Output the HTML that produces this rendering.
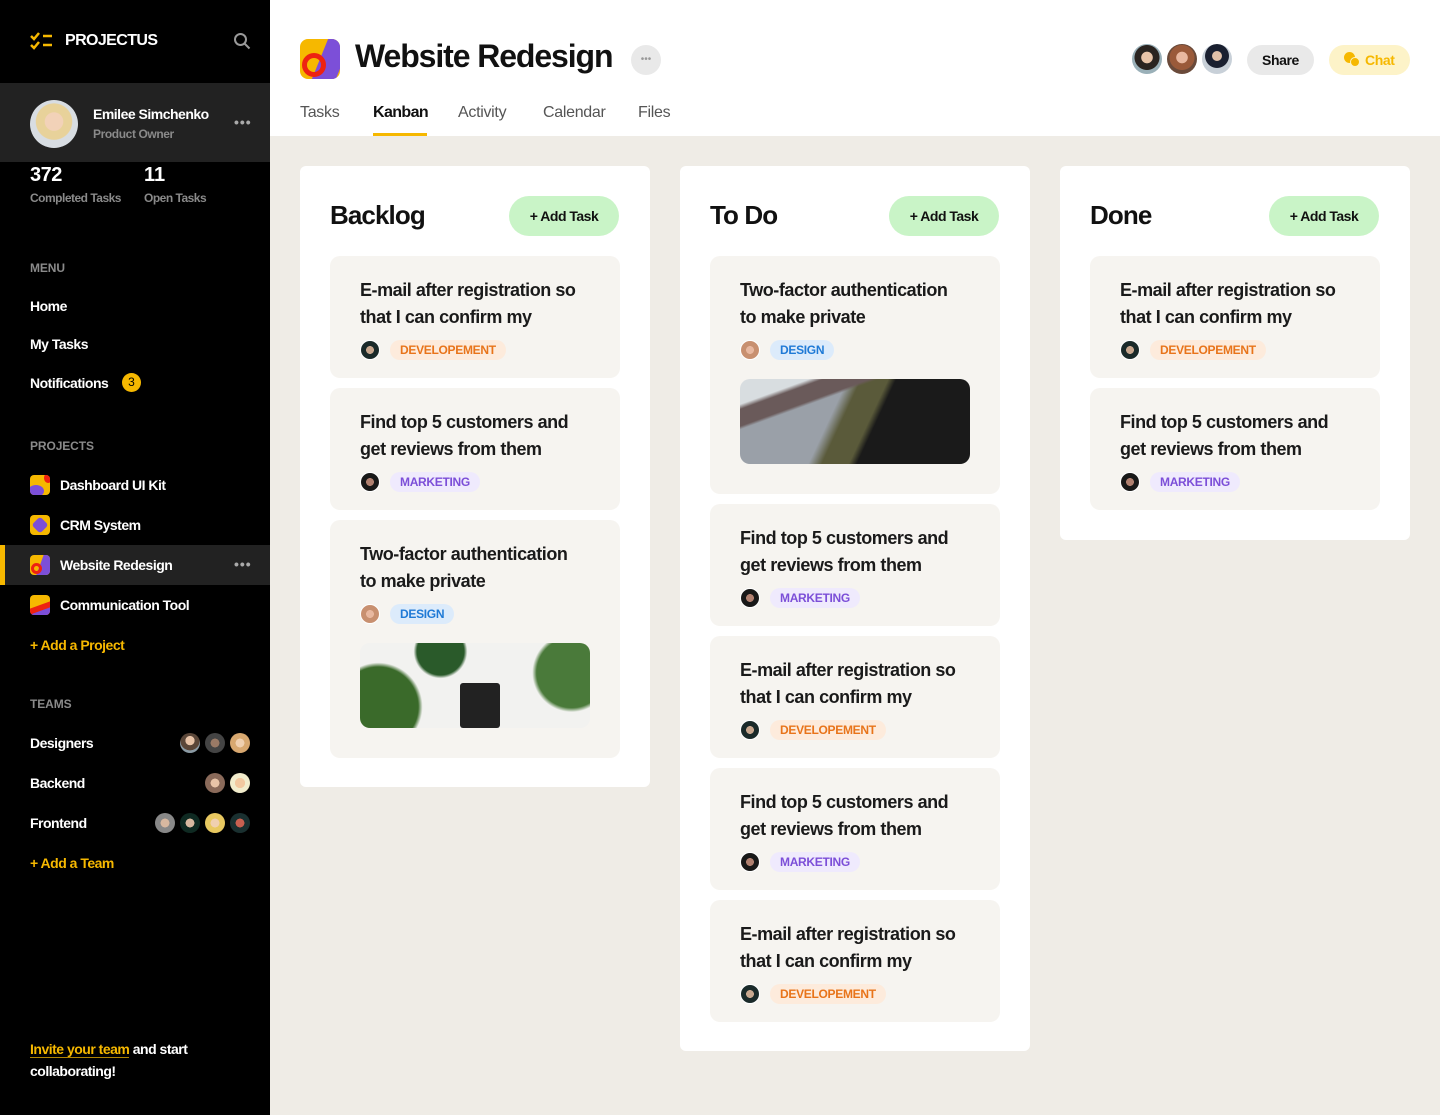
<!DOCTYPE html>
<html><head><meta charset="utf-8">
<style>
*{box-sizing:border-box;margin:0;padding:0}
body{width:1440px;height:1115px;font-family:"Liberation Sans",Arial,sans-serif;background:#efece6;position:relative;overflow:hidden;color:#111}
.sb{position:absolute;left:0;top:0;width:270px;height:1115px;background:#000;color:#fff}
.a{position:absolute}
.b{font-weight:bold}
.lbl{font-size:12px;font-weight:bold;color:#8a8a8a;letter-spacing:-.1px}
.nav{font-size:14px;font-weight:bold;color:#fff;letter-spacing:-.5px}
.pic{position:absolute;width:20px;height:20px;border-radius:4px;overflow:hidden}
.av{display:inline-block;border-radius:50%;background:radial-gradient(circle at 50% 38%,#e8c4a8 0 28%,#5a4638 30% 60%,#8a9aa4 62%)}
.main{position:absolute;left:270px;top:0;width:1170px;height:136px;background:#fff}
.tab{position:absolute;top:104px;font-size:16px;color:#555;letter-spacing:-.3px}
.col{position:absolute;top:166px;width:350px;background:#fff;border-radius:6px;padding:0 30px}
.col h2{position:absolute;left:30px;top:34px;font-size:26px;font-weight:bold;color:#111;letter-spacing:-.9px}
.add{position:absolute;right:31px;top:30px;width:110px;height:40px;border-radius:20px;background:#c9f4c7;font-size:14px;font-weight:bold;text-align:center;line-height:40px;color:#111;letter-spacing:-.5px}
.cards{position:absolute;left:30px;top:90px;width:290px}
.card{background:#f6f4f0;border-radius:10px;padding:21px 30px 17px;margin-bottom:10px}
.card .t{font-size:18px;line-height:27px;font-weight:bold;color:#1a1a1a;letter-spacing:-.45px;white-space:nowrap}
.row{display:flex;align-items:center;margin-top:8px;height:22px}
.row .av{width:20px;height:20px;margin-right:10px;border:1px solid #fff}
.tag{font-size:12px;font-weight:bold;padding:0 10px;height:20px;line-height:20px;border-radius:10px;letter-spacing:-.3px}
.dev{background:#fdebdc;color:#e8741a}
.mk{background:#efeafd;color:#7c4fd8}
.ds{background:#dcebfb;color:#1f7ad6}
.img{height:85px;border-radius:10px;margin-top:18px}
</style></head><body>
<div class="sb">
  <svg class="a" style="left:30px;top:32px" width="24" height="18" viewBox="0 0 24 18"><path d="M1 4l3 3 5-6M1 13l3 3 5-6" stroke="#f6b800" stroke-width="2.5" fill="none"/><path d="M13 4h9M13 13h9" stroke="#f6b800" stroke-width="2.5"/></svg>
  <div class="a b" style="left:65px;top:32px;font-size:16px;letter-spacing:-.6px">PROJECTUS</div>
  <svg class="a" style="left:233px;top:32px" width="18" height="18" viewBox="0 0 18 18"><circle cx="7.5" cy="7.5" r="5.5" stroke="#999" stroke-width="2" fill="none"/><path d="M11.5 11.5l5 5" stroke="#999" stroke-width="2"/></svg>
  <div class="a" style="left:0;top:83px;width:270px;height:79px;background:#222"></div>
  <div class="a av" style="left:30px;top:100px;width:48px;height:48px;background:radial-gradient(circle at 50% 45%,#f2d2b8 0 25%,#e8d29a 27% 50%,#d8dde2 52%)"></div>
  <div class="a nav" style="left:93px;top:106px">Emilee Simchenko</div>
  <div class="a" style="left:93px;top:127px;font-size:12px;color:#8a8a8a;font-weight:bold;letter-spacing:-.4px">Product Owner</div>
  <div class="a b" style="left:234px;top:114px;color:#aaa;font-size:14px;letter-spacing:1px">•••</div>
  <div class="a b" style="left:30px;top:164px;font-size:20px;letter-spacing:-.5px">372</div>
  <div class="a" style="left:30px;top:191px;font-size:12px;color:#8a8a8a;font-weight:bold;letter-spacing:-.5px">Completed Tasks</div>
  <div class="a b" style="left:144px;top:164px;font-size:20px">11</div>
  <div class="a" style="left:144px;top:191px;font-size:12px;color:#8a8a8a;font-weight:bold;letter-spacing:-.5px">Open Tasks</div>
  <div class="a lbl" style="left:30px;top:261px">MENU</div>
  <div class="a nav" style="left:30px;top:298px">Home</div>
  <div class="a nav" style="left:30px;top:336px">My Tasks</div>
  <div class="a nav" style="left:30px;top:375px">Notifications</div>
  <div class="a" style="left:122px;top:373px;width:19px;height:19px;border-radius:50%;background:#f6b800;color:#000;font-size:12px;text-align:center;line-height:19px">3</div>
  <div class="a lbl" style="left:30px;top:439px">PROJECTS</div>
  <div class="pic" style="left:30px;top:475px;background:#f6b800"><div class="a" style="left:-2px;top:10px;width:16px;height:12px;border-radius:50%;background:#7c4fd8"></div><div class="a" style="left:14px;top:-2px;width:8px;height:10px;border-radius:50%;background:#e21"></div></div>
  <div class="a nav" style="left:60px;top:477px">Dashboard UI Kit</div>
  <div class="pic" style="left:30px;top:515px;background:#f6b800"><div class="a" style="left:4px;top:4px;width:12px;height:12px;border-radius:3px;transform:rotate(45deg);background:#7c4fd8"></div></div>
  <div class="a nav" style="left:60px;top:517px">CRM System</div>
  <div class="a" style="left:0;top:545px;width:270px;height:40px;background:#222"></div>
  <div class="a" style="left:0;top:545px;width:5px;height:40px;background:#f6b800"></div>
  <div class="pic" style="left:30px;top:555px;background:#f6b800"><div class="a" style="left:10px;top:-4px;width:14px;height:28px;background:#7c4fd8;transform:skewX(-20deg)"></div><div class="a" style="left:1px;top:8px;width:11px;height:11px;border-radius:50%;border:3px solid #e21"></div></div>
  <div class="a nav" style="left:60px;top:557px">Website Redesign</div>
  <div class="a b" style="left:234px;top:556px;color:#aaa;font-size:14px;letter-spacing:1px">•••</div>
  <div class="pic" style="left:30px;top:595px;background:#f6b800"><div class="a" style="left:-4px;top:10px;width:28px;height:14px;background:#e21;transform:skewY(-20deg)"></div><div class="a" style="left:-4px;top:16px;width:28px;height:10px;background:#7c4fd8;transform:skewY(-20deg)"></div></div>
  <div class="a nav" style="left:60px;top:597px">Communication Tool</div>
  <div class="a nav" style="left:30px;top:637px;color:#f6b800">+ Add a Project</div>
  <div class="a lbl" style="left:30px;top:697px">TEAMS</div>
  <div class="a nav" style="left:30px;top:735px">Designers</div>
  <div class="a nav" style="left:30px;top:775px">Backend</div>
  <div class="a nav" style="left:30px;top:815px">Frontend</div>
  <div class="a" style="left:180px;top:733px"><span class="av" style="width:20px;height:20px"></span></div>
  <div class="a" style="left:205px;top:733px"><span class="av" style="width:20px;height:20px;background:radial-gradient(circle,#9a7a66 0 30%,#444 32%)"></span></div>
  <div class="a" style="left:230px;top:733px"><span class="av" style="width:20px;height:20px;background:radial-gradient(circle,#f0d0b0 0 30%,#d8a870 32%)"></span></div>
  <div class="a" style="left:205px;top:773px"><span class="av" style="width:20px;height:20px;background:radial-gradient(circle,#e8c4a8 0 30%,#8a6a5a 32%)"></span></div>
  <div class="a" style="left:230px;top:773px"><span class="av" style="width:20px;height:20px;background:radial-gradient(circle,#f2c8a0 0 35%,#f2eccc 37%)"></span></div>
  <div class="a" style="left:155px;top:813px"><span class="av" style="width:20px;height:20px;background:radial-gradient(circle,#d8b8a0 0 30%,#888 32%)"></span></div>
  <div class="a" style="left:180px;top:813px"><span class="av" style="width:20px;height:20px;background:radial-gradient(circle,#d8b8a0 0 30%,#0f2a22 32%)"></span></div>
  <div class="a" style="left:205px;top:813px"><span class="av" style="width:20px;height:20px;background:radial-gradient(circle,#f0d0b0 0 30%,#e8c860 32%)"></span></div>
  <div class="a" style="left:230px;top:813px"><span class="av" style="width:20px;height:20px;background:radial-gradient(circle,#c86050 0 30%,#1a3030 32%)"></span></div>
  <div class="a nav" style="left:30px;top:855px;color:#f6b800">+ Add a Team</div>
  <div class="a nav" style="left:30px;top:1038px;line-height:22px"><span style="color:#f6b800;border-bottom:1px solid #b08400">Invite your team</span> and start<br>collaborating!</div>
</div>

<div class="main">
  <div class="a" style="left:30px;top:39px;width:40px;height:40px;border-radius:8px;overflow:hidden;background:#f6b800"><div class="a" style="left:20px;top:-6px;width:24px;height:52px;background:#7c4fd8;transform:skewX(-22deg)"></div><div class="a" style="left:2px;top:14px;width:24px;height:24px;border-radius:50%;border:5px solid #e21"></div></div>
  <div class="a b" style="left:85px;top:38px;font-size:32px;letter-spacing:-1.1px;color:#111">Website Redesign</div>
  <div class="a" style="left:361px;top:45px;width:30px;height:30px;border-radius:50%;background:#e9e9e9;color:#999;font-size:10px;text-align:center;line-height:30px">•••</div>
  <div class="tab" style="left:30px">Tasks</div>
  <div class="tab" style="left:103px;color:#111;font-weight:bold;letter-spacing:-.6px">Kanban</div>
  <div class="a" style="left:103px;top:133px;width:54px;height:3px;background:#f6b800"></div>
  <div class="tab" style="left:188px">Activity</div>
  <div class="tab" style="left:273px">Calendar</div>
  <div class="tab" style="left:368px">Files</div>
  <div class="a" style="left:862px;top:44px"><span class="av" style="width:30px;height:30px;background:radial-gradient(circle at 50% 45%,#e8c4a8 0 25%,#2a2420 27% 55%,#9ab0b8 57%)"></span></div>
  <div class="a" style="left:897px;top:44px"><span class="av" style="width:30px;height:30px;background:radial-gradient(circle at 50% 45%,#e8b8a0 0 25%,#9a5a3a 27% 55%,#6a4a3a 57%)"></span></div>
  <div class="a" style="left:932px;top:44px"><span class="av" style="width:30px;height:30px;background:radial-gradient(circle at 50% 40%,#e0c0a8 0 20%,#1a2030 22% 50%,#c8d0d8 52%)"></span></div>
  <div class="a b" style="left:977px;top:45px;width:67px;height:30px;border-radius:15px;background:#e9e9e9;font-size:14px;text-align:center;line-height:30px;letter-spacing:-.4px">Share</div>
  <div class="a b" style="left:1059px;top:45px;width:81px;height:30px;border-radius:15px;background:#fdf3c8;color:#f6b800;font-size:14px;line-height:30px;padding-left:36px;letter-spacing:-.4px">Chat</div>
  <div class="a" style="left:1074px;top:52px;width:11px;height:11px;border-radius:50%;background:#f6b800"></div>
  <div class="a" style="left:1080px;top:57px;width:10px;height:10px;border-radius:50%;background:#f6b800;border:1px solid #fdf3c8"></div>
</div>

<div class="col" style="left:300px;height:621px">
  <h2>Backlog</h2><div class="add">+ Add Task</div>
  <div class="cards">
    <div class="card"><div class="t">E-mail after registration so<br>that I can confirm my</div><div class="row"><span class="av" style="background:radial-gradient(circle,#c8a890 0 30%,#1a2a2a 32%)"></span><span class="tag dev">DEVELOPEMENT</span></div></div>
    <div class="card"><div class="t">Find top 5 customers and<br>get reviews from them</div><div class="row"><span class="av" style="background:radial-gradient(circle,#b08070 0 30%,#181818 32%)"></span><span class="tag mk">MARKETING</span></div></div>
    <div class="card" style="padding-bottom:30px"><div class="t">Two-factor authentication<br>to make private</div><div class="row"><span class="av" style="background:radial-gradient(circle,#e8b8a0 0 30%,#c89070 32%)"></span><span class="tag ds">DESIGN</span></div><div class="img" style="background:radial-gradient(circle at 8% 75%,#3a6a2a 0 18%,transparent 20%),radial-gradient(circle at 92% 35%,#4a7a3a 0 16%,transparent 18%),radial-gradient(circle at 35% 10%,#2a5a2a 0 14%,transparent 16%),linear-gradient(#f2f2f0,#f2f2f0)"><div style="position:relative;left:100px;top:40px;width:40px;height:45px;background:#222;border-radius:3px"></div></div></div>
  </div>
</div>

<div class="col" style="left:680px;height:885px">
  <h2>To Do</h2><div class="add">+ Add Task</div>
  <div class="cards">
    <div class="card" style="padding-bottom:30px"><div class="t">Two-factor authentication<br>to make private</div><div class="row"><span class="av" style="background:radial-gradient(circle,#e8b8a0 0 30%,#c89070 32%)"></span><span class="tag ds">DESIGN</span></div><div class="img" style="background:linear-gradient(160deg,#d8dde0 0 15%,#6a5a5a 18% 28%,transparent 30%),linear-gradient(115deg,#9aa0a8 0 40%,#5a5a3a 45% 55%,#1a1a1a 58%)"></div></div>
    <div class="card"><div class="t">Find top 5 customers and<br>get reviews from them</div><div class="row"><span class="av" style="background:radial-gradient(circle,#b08070 0 30%,#181818 32%)"></span><span class="tag mk">MARKETING</span></div></div>
    <div class="card"><div class="t">E-mail after registration so<br>that I can confirm my</div><div class="row"><span class="av" style="background:radial-gradient(circle,#c8a890 0 30%,#1a2a2a 32%)"></span><span class="tag dev">DEVELOPEMENT</span></div></div>
    <div class="card"><div class="t">Find top 5 customers and<br>get reviews from them</div><div class="row"><span class="av" style="background:radial-gradient(circle,#b08070 0 30%,#181818 32%)"></span><span class="tag mk">MARKETING</span></div></div>
    <div class="card"><div class="t">E-mail after registration so<br>that I can confirm my</div><div class="row"><span class="av" style="background:radial-gradient(circle,#c8a890 0 30%,#1a2a2a 32%)"></span><span class="tag dev">DEVELOPEMENT</span></div></div>
  </div>
</div>

<div class="col" style="left:1060px;height:374px">
  <h2>Done</h2><div class="add">+ Add Task</div>
  <div class="cards">
    <div class="card"><div class="t">E-mail after registration so<br>that I can confirm my</div><div class="row"><span class="av" style="background:radial-gradient(circle,#c8a890 0 30%,#1a2a2a 32%)"></span><span class="tag dev">DEVELOPEMENT</span></div></div>
    <div class="card"><div class="t">Find top 5 customers and<br>get reviews from them</div><div class="row"><span class="av" style="background:radial-gradient(circle,#b08070 0 30%,#181818 32%)"></span><span class="tag mk">MARKETING</span></div></div>
  </div>
</div>
</body></html>
